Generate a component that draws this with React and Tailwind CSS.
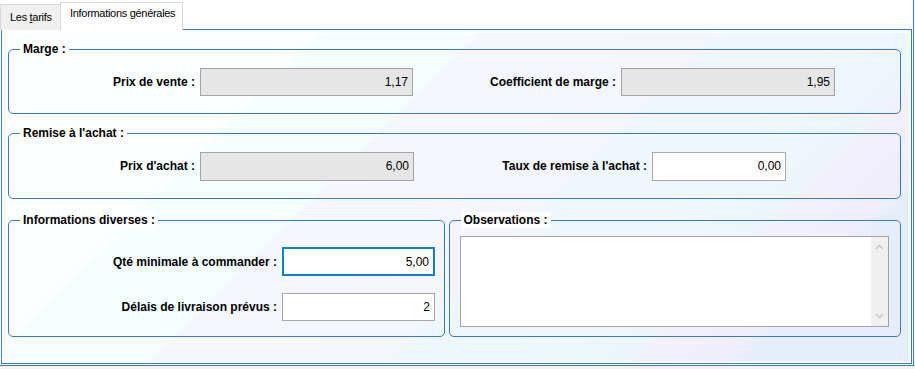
import React from 'react';

const BLUE = 'border-[#3a7cbf]';

const Box = ({ legend, className, children }) => (
  <div className={`relative border border-[#3a7cbf] rounded-[5px] ${className}`}>
    <span className="absolute left-[11px] -top-[9px] h-[16px] bg-white px-[3px] text-[12px] font-bold leading-[16px] whitespace-nowrap">
      {legend}
    </span>
    {children}
  </div>
);

const Label = ({ className, children }) => (
  <div className={`text-right text-[12px] font-bold whitespace-nowrap ${className}`}>{children}</div>
);

const Field = ({ className, value, readOnly, focus }) => (
  <input
    readOnly
    value={value}
    className={`text-right text-[12px] pr-[4px] outline-none ${
      focus
        ? 'border-2 border-[#0f7fd4] bg-white'
        : readOnly
        ? 'border border-[#a3a3a3] bg-[#e6e6e6]'
        : 'border border-[#a8a8a8] bg-white'
    } ${className}`}
  />
);

const Chevron = ({ up }) => (
  <svg width="9" height="6" viewBox="0 0 9 6" className="block">
    <path
      d={up ? 'M1 5 L4.5 1.5 L8 5' : 'M1 1 L4.5 4.5 L8 1'}
      fill="none"
      stroke="#c4c4c4"
      strokeWidth="1.4"
    />
  </svg>
);

export default function App() {
  return (
    <div className="w-[915px] h-[369px] bg-white text-black font-['Liberation_Sans',Arial,sans-serif] flex flex-col">
      <div className={`w-[914px] h-[366px] border-r border-b ${BLUE} flex flex-col`}>
        {/* tabs */}
        <div className="flex h-[30px] w-[912px] items-end">
          <div className="h-[26px] w-[60px] bg-[#f0f0f0] border-l border-t border-[#d9d9d9] pl-[9px] pt-[5px] text-[11px] leading-[14px] tracking-[-0.3px]">
            Les <span className="underline">t</span>arifs
          </div>
          <div className="h-[28px] w-[123px] bg-white border-l border-t border-r border-[#d9d9d9] pl-[9px] pt-[3px] text-[11px] leading-[14px] tracking-[-0.3px] whitespace-nowrap">
            Informations générales
          </div>
          <div className={`flex-1 h-full border-b ${BLUE}`} />
        </div>

        {/* panel */}
        <div className={`ml-px w-[911px] flex-1 mb-px border-l border-r border-b ${BLUE} px-[2px] pt-[3px] pb-[2px]`}>
          <div className="h-full pl-[4px] pr-[8px] pt-[16px] flex flex-col bg-[linear-gradient(135deg,#fbffff_0%,#fbffff_25%,#f4feff_26%,#f4feff_38%,#f6f6fe_39%,#f5f5fd_57.5%,#eff7fe_58.5%,#edf5fe_77%,#f2f0fd_78%,#f0eefc_85%,#e7eefb_86%,#e5edfb_100%)]">
            <Box legend="Marge :" className="h-[65px] flex items-center">
              <Label className="w-[186px]">Prix de vente :</Label>
              <Field readOnly value="1,17" className="ml-[5px] w-[213px] h-[28px]" />
              <Label className="w-[203px]">Coefficient de marge :</Label>
              <Field readOnly value="1,95" className="ml-[5px] w-[214px] h-[28px]" />
            </Box>

            <Box legend="Remise à l'achat :" className="mt-[19px] h-[66px] flex items-center">
              <Label className="w-[186px]">Prix d'achat :</Label>
              <Field readOnly value="6,00" className="ml-[5px] w-[214px] h-[29px]" />
              <Label className="w-[233px]">Taux de remise à l'achat :</Label>
              <Field value="0,00" className="ml-[5px] w-[134px] h-[29px]" />
            </Box>

            <div className="mt-[21px] h-[117px] flex gap-[4px]">
              <Box legend="Informations diverses :" className="w-[437px] pt-[26px] flex flex-col gap-[17px]">
                <div className="flex items-center">
                  <Label className="w-[268px]">Qté minimale à commander :</Label>
                  <Field focus value="5,00" className="ml-[5px] w-[153px] h-[29px]" />
                </div>
                <div className="flex items-center">
                  <Label className="w-[268px]">Délais de livraison prévus :</Label>
                  <Field value="2" className="ml-[5px] w-[153px] h-[28px]" />
                </div>
              </Box>

              <Box legend="Observations :" className="w-[453px] pl-[10px] pt-[15px]">
                <div className="w-[429px] h-[91px] border border-[#a3a3a3] bg-white flex">
                  <div className="flex-1" />
                  <div className="w-[17px] h-full bg-[#f0f0f0] flex flex-col items-center justify-between py-[7px]">
                    <Chevron up />
                    <Chevron />
                  </div>
                </div>
              </Box>
            </div>
          </div>
        </div>
      </div>
      <div className="flex-1 bg-[#f3f3f3]" />
    </div>
  );
}
